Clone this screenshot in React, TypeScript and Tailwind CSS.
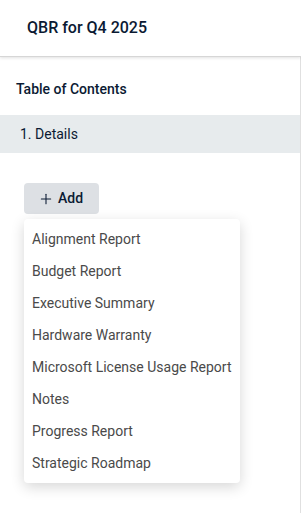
import React from "react";
import { Plus } from "lucide-react";

const sections = [
  "Alignment Report",
  "Budget Report",
  "Executive Summary",
  "Hardware Warranty",
  "Microsoft License Usage Report",
  "Notes",
  "Progress Report",
  "Strategic Roadmap",
];

export default function App() {
  return (
    <div
      className="flex h-[513px] w-[301px] flex-col bg-white text-[#0b1a33]"
      style={{ fontFamily: "Roboto, 'Liberation Sans', sans-serif" }}
    >
      <header className="z-10 flex h-[57px] shrink-0 items-center border-b border-[#d6d6d6] pl-[27px] shadow-[0_1px_3px_rgba(0,0,0,0.12)]">
        <h1 className="text-[16px] font-medium">QBR for Q4 2025</h1>
      </header>

      <div className="flex flex-1 flex-col border-r border-[#e0e0e0]">
        <div className="flex h-[58px] items-center pl-4 pt-[6px]">
          <h2 className="text-[14px] font-medium">Table of Contents</h2>
        </div>

        <div className="flex h-[38px] items-center bg-[#e7ebed] pl-5 text-[14px]">
          1. Details
        </div>

        <div className="relative pl-6 pt-[30px]">
          <button
            type="button"
            className="flex h-[31px] items-center gap-1 rounded bg-[#dde0e4] pl-[14px] pr-[16px] text-[14px] font-medium"
          >
            <Plus size={16} strokeWidth={1.6} />
            Add
          </button>

          <ul className="mt-[5px] w-[216px] rounded bg-white py-1 text-[14px] text-[#4a4a4a] shadow-[0_4px_14px_rgba(0,0,0,0.16)]">
            {sections.map((s) => (
              <li key={s} className="flex h-8 items-center pl-2">
                {s}
              </li>
            ))}
          </ul>
        </div>
      </div>
    </div>
  );
}
